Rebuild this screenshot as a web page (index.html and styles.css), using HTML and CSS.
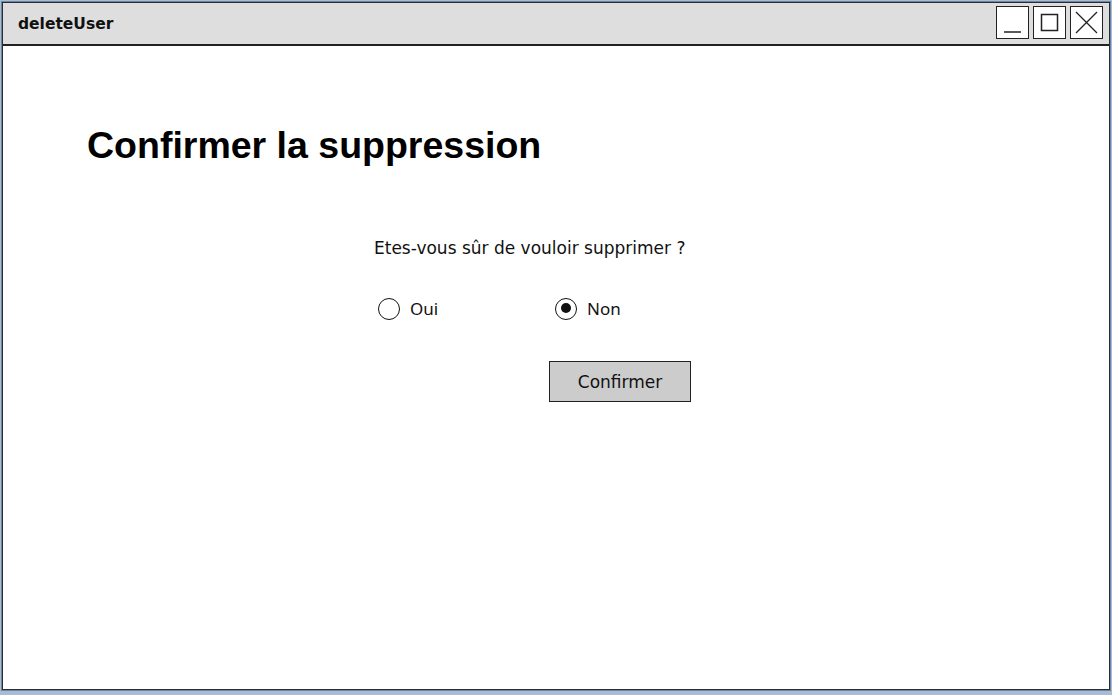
FILE: index.html
```html
<!DOCTYPE html>
<html lang="fr">
<head>
<meta charset="utf-8">
<title>deleteUser</title>
<link rel="stylesheet" href="styles.css">
</head>
<body>
<div class="window">
  <div class="titlebar">
    <span class="title">deleteUser</span>
    <div class="controls">
      <span class="ctl"><svg width="31" height="31" viewBox="0 0 31 31"><line x1="7" y1="25" x2="24" y2="25" stroke="#222" stroke-width="1.5"/></svg></span>
      <span class="ctl"><svg width="31" height="31" viewBox="0 0 31 31"><rect x="7.5" y="7.5" width="16" height="16" fill="none" stroke="#222" stroke-width="1.5"/></svg></span>
      <span class="ctl"><svg width="31" height="31" viewBox="0 0 31 31"><path d="M5 5 L26 26 M26 5 L5 26" stroke="#222" stroke-width="1.3"/></svg></span>
    </div>
  </div>
  <div class="content">
    <h1 class="heading">Confirmer la suppression</h1>
    <div class="form">
      <p class="question">Etes-vous sûr de vouloir supprimer ?</p>
      <div class="radios">
        <label class="radio"><span class="dot"></span><span class="rlabel">Oui</span></label>
        <label class="radio"><span class="dot checked"></span><span class="rlabel">Non</span></label>
      </div>
      <div class="actions">
        <button class="btn">Confirmer</button>
      </div>
    </div>
  </div>
</div>
</body>
</html>
```
FILE: styles.css
```css
html, body {
  margin: 0;
  padding: 0;
}
body {
  width: 1112px;
  height: 695px;
  background: #a8bdd4;
  overflow: hidden;
  box-sizing: border-box;
  padding: 1px 1px 0 1px;
}
.window {
  box-sizing: border-box;
  width: 1110px;
  height: 690px;
  border: 1px solid #6b86a5;
  outline: 1px solid #2d2d2d;
  outline-offset: -2px;
  background: #fff;
  display: flex;
  flex-direction: column;
}
.titlebar {
  box-sizing: border-box;
  height: 43px;
  margin: 1px 1px 0 1px;
  background: #dedede;
  border-bottom: 2px solid #222;
  display: flex;
  align-items: center;
  justify-content: space-between;
  padding: 0 6px 0 15px;
}
.title {
  font-family: "DejaVu Sans", sans-serif;
  font-weight: bold;
  font-size: 15.5px;
  color: #111;
  margin-top: 1px;
}
.controls {
  display: flex;
  gap: 4px;
  margin-top: -2px;
}
.ctl {
  display: block;
  width: 31px;
  height: 31px;
  border: 1px solid #222;
  background: #fff;
}
.ctl svg { display: block; }
.content {
  flex: 1;
  padding: 78px 0 0 85px;
}
.heading {
  margin: 0;
  font-family: "Liberation Sans", Arial, sans-serif;
  font-weight: bold;
  font-size: 37.5px;
  line-height: 42px;
  color: #000;
}
.form {
  margin-left: 286px;
  padding-top: 71px;
  font-family: "DejaVu Sans", sans-serif;
  color: #111;
}
.question {
  margin: 0;
  font-size: 17px;
  line-height: 22px;
  padding-left: 1px;
}
.radios {
  display: flex;
  margin-top: 38px;
  padding-left: 5px;
}
.radio {
  display: flex;
  align-items: center;
  gap: 10px;
  width: 177px;
  font-family: "Noto Sans", sans-serif;
  font-size: 17px;
}
.dot {
  box-sizing: border-box;
  width: 22px;
  height: 22px;
  border: 1.6px solid #111;
  border-radius: 50%;
  background: #fff;
  position: relative;
}
.dot.checked::after {
  content: "";
  position: absolute;
  left: 4.5px;
  top: 4.5px;
  width: 10px;
  height: 10px;
  border-radius: 50%;
  background: #111;
}
.actions {
  margin-top: 41px;
  padding-left: 176px;
}
.btn {
  box-sizing: border-box;
  width: 142px;
  height: 41px;
  background: #cccccc;
  border: 1.5px solid #222;
  border-radius: 0;
  font-family: "DejaVu Sans", sans-serif;
  font-size: 17px;
  color: #111;
  padding: 0;
}
```
